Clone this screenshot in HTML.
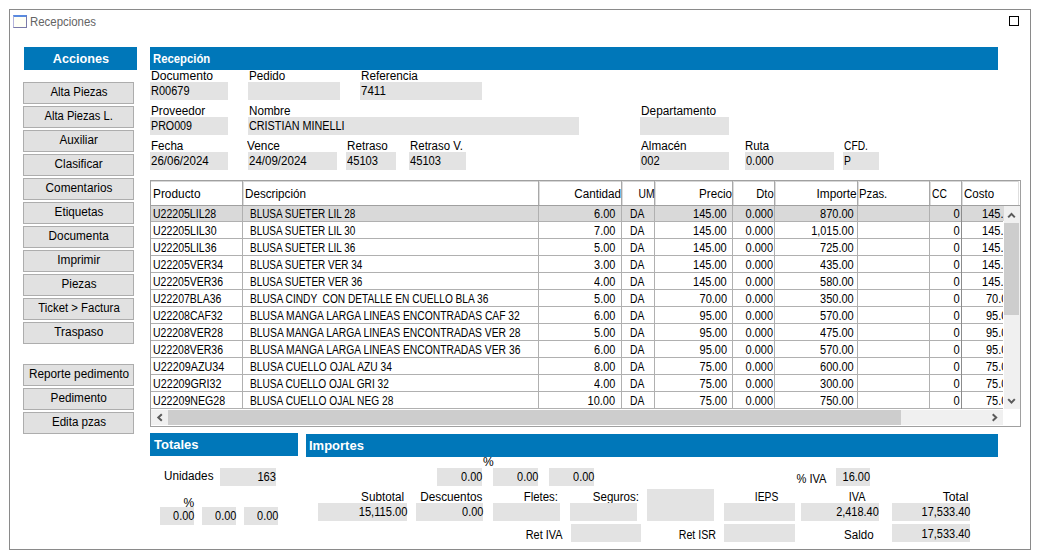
<!DOCTYPE html>
<html><head><meta charset="utf-8"><style>
html,body{margin:0;padding:0;background:#fff;}
body{width:1039px;height:558px;position:relative;overflow:hidden;font-family:"Liberation Sans",sans-serif;font-size:12px;color:#000;}
div{position:absolute;}
.t{position:absolute;white-space:pre;}
</style></head><body>
<div style="left:9px;top:9px;width:1022px;height:541px;border:1px solid #8a8a8a;box-sizing:border-box;background:#fff"></div>
<div style="left:13px;top:15px;width:14px;height:13px;box-sizing:border-box;border:1px solid #7a7aa8;border-left-color:#b4b4dc;border-top:2px solid #5a8ae0;background:#fffff6"></div>
<span class="t" style="left:30px;transform-origin:0 0;top:15px;line-height:14px;font-size:12px;color:#646464;transform:scaleX(0.9514);">Recepciones</span>
<div style="left:1009px;top:16px;width:10px;height:10px;box-sizing:border-box;border:1.5px solid #000"></div>
<div style="left:24px;top:47px;width:113px;height:23px;background:#0077b9"></div>
<span class="t" style="left:51.59px;transform-origin:50% 0;top:51px;line-height:15px;font-size:13px;font-weight:bold;color:#fff;transform:scaleX(0.9738);">Acciones</span>
<div style="left:150px;top:47px;width:848px;height:23px;background:#0077b9"></div>
<span class="t" style="left:153px;transform-origin:0 0;top:52px;line-height:14px;font-size:12px;font-weight:bold;color:#fff;transform:scaleX(0.9428);">Recepción</span>
<div style="left:150px;top:433px;width:148px;height:23px;background:#0077b9"></div>
<span class="t" style="left:154px;transform-origin:0 0;top:437px;line-height:15px;font-size:13px;font-weight:bold;color:#fff;">Totales</span>
<div style="left:306px;top:434px;width:692px;height:23px;background:#0077b9"></div>
<span class="t" style="left:309px;transform-origin:0 0;top:438px;line-height:15px;font-size:13px;font-weight:bold;color:#fff;">Importes</span>
<div style="left:23px;top:82px;width:111px;height:22px;box-sizing:border-box;border:1px solid #adadad;background:#e1e1e1"></div>
<span class="t" style="left:48.99px;transform-origin:50% 0;top:85px;line-height:14px;font-size:12px;color:#000;transform:scaleX(0.9516);">Alta Piezas</span>
<div style="left:23px;top:106px;width:111px;height:22px;box-sizing:border-box;border:1px solid #adadad;background:#e1e1e1"></div>
<span class="t" style="left:42.33px;transform-origin:50% 0;top:109px;line-height:14px;font-size:12px;color:#000;transform:scaleX(0.9295);">Alta Piezas L.</span>
<div style="left:23px;top:130px;width:111px;height:22px;box-sizing:border-box;border:1px solid #adadad;background:#e1e1e1"></div>
<span class="t" style="left:59.32px;transform-origin:50% 0;top:133px;line-height:14px;font-size:12px;color:#000;transform:scaleX(0.9715);">Auxiliar</span>
<div style="left:23px;top:154px;width:111px;height:22px;box-sizing:border-box;border:1px solid #adadad;background:#e1e1e1"></div>
<span class="t" style="left:54.32px;transform-origin:50% 0;top:157px;line-height:14px;font-size:12px;color:#000;transform:scaleX(0.9754);">Clasificar</span>
<div style="left:23px;top:178px;width:111px;height:22px;box-sizing:border-box;border:1px solid #adadad;background:#e1e1e1"></div>
<span class="t" style="left:44.98px;transform-origin:50% 0;top:181px;line-height:14px;font-size:12px;color:#000;transform:scaleX(0.9822);">Comentarios</span>
<div style="left:23px;top:202px;width:111px;height:22px;box-sizing:border-box;border:1px solid #adadad;background:#e1e1e1"></div>
<span class="t" style="left:53.99px;transform-origin:50% 0;top:205px;line-height:14px;font-size:12px;color:#000;transform:scaleX(0.9776);">Etiquetas</span>
<div style="left:23px;top:226px;width:111px;height:22px;box-sizing:border-box;border:1px solid #adadad;background:#e1e1e1"></div>
<span class="t" style="left:48.32px;transform-origin:50% 0;top:229px;line-height:14px;font-size:12px;color:#000;transform:scaleX(0.9802);">Documenta</span>
<div style="left:23px;top:250px;width:111px;height:22px;box-sizing:border-box;border:1px solid #adadad;background:#e1e1e1"></div>
<span class="t" style="left:57.33px;transform-origin:50% 0;top:253px;line-height:14px;font-size:12px;color:#000;transform:scaleX(0.9893);">Imprimir</span>
<div style="left:23px;top:274px;width:111px;height:22px;box-sizing:border-box;border:1px solid #adadad;background:#e1e1e1"></div>
<span class="t" style="left:60.99px;transform-origin:50% 0;top:277px;line-height:14px;font-size:12px;color:#000;transform:scaleX(0.9689);">Piezas</span>
<div style="left:23px;top:298px;width:111px;height:22px;box-sizing:border-box;border:1px solid #adadad;background:#e1e1e1"></div>
<span class="t" style="left:36.05px;transform-origin:50% 0;top:301px;line-height:14px;font-size:12px;color:#000;transform:scaleX(0.9494);">Ticket &gt; Factura</span>
<div style="left:23px;top:322px;width:111px;height:22px;box-sizing:border-box;border:1px solid #adadad;background:#e1e1e1"></div>
<span class="t" style="left:54.21px;transform-origin:50% 0;top:325px;line-height:14px;font-size:12px;color:#000;transform:scaleX(0.9881);">Traspaso</span>
<div style="left:23px;top:364px;width:111px;height:22px;box-sizing:border-box;border:1px solid #adadad;background:#e1e1e1"></div>
<span class="t" style="left:27.98px;transform-origin:50% 0;top:367px;line-height:14px;font-size:12px;color:#000;transform:scaleX(0.9816);">Reporte pedimento</span>
<div style="left:23px;top:388px;width:111px;height:22px;box-sizing:border-box;border:1px solid #adadad;background:#e1e1e1"></div>
<span class="t" style="left:50.32px;transform-origin:50% 0;top:391px;line-height:14px;font-size:12px;color:#000;transform:scaleX(0.9805);">Pedimento</span>
<div style="left:23px;top:412px;width:111px;height:22px;box-sizing:border-box;border:1px solid #adadad;background:#e1e1e1"></div>
<span class="t" style="left:50.99px;transform-origin:50% 0;top:415px;line-height:14px;font-size:12px;color:#000;transform:scaleX(0.9681);">Edita pzas</span>
<div style="left:150px;top:82px;width:78px;height:18px;background:#e3e3e3"></div>
<span class="t" style="left:151px;transform-origin:0 0;top:69px;line-height:14px;font-size:12px;color:#000;transform:scaleX(1.0104);">Documento</span>
<span class="t" style="left:151px;transform-origin:0 0;top:84px;line-height:14px;font-size:12px;color:#000;transform:scaleX(0.9156);">R00679</span>
<div style="left:248px;top:82px;width:92px;height:18px;background:#e3e3e3"></div>
<span class="t" style="left:249px;transform-origin:0 0;top:69px;line-height:14px;font-size:12px;color:#000;transform:scaleX(0.9700);">Pedido</span>
<div style="left:360px;top:82px;width:122px;height:18px;background:#e3e3e3"></div>
<span class="t" style="left:361px;transform-origin:0 0;top:69px;line-height:14px;font-size:12px;color:#000;transform:scaleX(0.9791);">Referencia</span>
<span class="t" style="left:361px;transform-origin:0 0;top:84px;line-height:14px;font-size:12px;color:#000;transform:scaleX(0.9621);">7411</span>
<div style="left:150px;top:117px;width:78px;height:18px;background:#e3e3e3"></div>
<span class="t" style="left:151px;transform-origin:0 0;top:104px;line-height:14px;font-size:12px;color:#000;transform:scaleX(0.9798);">Proveedor</span>
<span class="t" style="left:151px;transform-origin:0 0;top:119px;line-height:14px;font-size:12px;color:#000;transform:scaleX(0.8904);">PRO009</span>
<div style="left:248px;top:117px;width:331px;height:18px;background:#e3e3e3"></div>
<span class="t" style="left:249px;transform-origin:0 0;top:104px;line-height:14px;font-size:12px;color:#000;transform:scaleX(0.9716);">Nombre</span>
<span class="t" style="left:249px;transform-origin:0 0;top:119px;line-height:14px;font-size:12px;color:#000;transform:scaleX(0.9009);">CRISTIAN MINELLI</span>
<div style="left:640px;top:117px;width:89px;height:18px;background:#e3e3e3"></div>
<span class="t" style="left:641px;transform-origin:0 0;top:104px;line-height:14px;font-size:12px;color:#000;transform:scaleX(0.9864);">Departamento</span>
<div style="left:150px;top:152px;width:78px;height:18px;background:#e3e3e3"></div>
<span class="t" style="left:151px;transform-origin:0 0;top:139px;line-height:14px;font-size:12px;color:#000;transform:scaleX(0.9692);">Fecha</span>
<span class="t" style="left:151px;transform-origin:0 0;top:154px;line-height:14px;font-size:12px;color:#000;transform:scaleX(0.9612);">26/06/2024</span>
<div style="left:248px;top:152px;width:89px;height:18px;background:#e3e3e3"></div>
<span class="t" style="left:247px;transform-origin:0 0;top:139px;line-height:14px;font-size:12px;color:#000;transform:scaleX(0.9861);">Vence</span>
<span class="t" style="left:249px;transform-origin:0 0;top:154px;line-height:14px;font-size:12px;color:#000;transform:scaleX(0.9612);">24/09/2024</span>
<div style="left:346px;top:152px;width:50px;height:18px;background:#e3e3e3"></div>
<span class="t" style="left:347px;transform-origin:0 0;top:139px;line-height:14px;font-size:12px;color:#000;transform:scaleX(0.9711);">Retraso</span>
<span class="t" style="left:347px;transform-origin:0 0;top:154px;line-height:14px;font-size:12px;color:#000;transform:scaleX(0.9300);">45103</span>
<div style="left:409px;top:152px;width:57px;height:18px;background:#e3e3e3"></div>
<span class="t" style="left:410px;transform-origin:0 0;top:139px;line-height:14px;font-size:12px;color:#000;transform:scaleX(0.9537);">Retraso V.</span>
<span class="t" style="left:410px;transform-origin:0 0;top:154px;line-height:14px;font-size:12px;color:#000;transform:scaleX(0.9300);">45103</span>
<div style="left:640px;top:152px;width:89px;height:18px;background:#e3e3e3"></div>
<span class="t" style="left:641px;transform-origin:0 0;top:139px;line-height:14px;font-size:12px;color:#000;transform:scaleX(0.9760);">Almacén</span>
<span class="t" style="left:641px;transform-origin:0 0;top:154px;line-height:14px;font-size:12px;color:#000;transform:scaleX(0.9300);">002</span>
<div style="left:745px;top:152px;width:89px;height:18px;background:#e3e3e3"></div>
<span class="t" style="left:744.5px;transform-origin:0 0;top:139px;line-height:14px;font-size:12px;color:#000;transform:scaleX(0.9521);">Ruta</span>
<span class="t" style="left:746px;transform-origin:0 0;top:154px;line-height:14px;font-size:12px;color:#000;transform:scaleX(0.9156);">0.000</span>
<div style="left:843px;top:152px;width:36px;height:18px;background:#e3e3e3"></div>
<span class="t" style="left:844px;transform-origin:0 0;top:139px;line-height:14px;font-size:12px;color:#000;transform:scaleX(0.8529);">CFD.</span>
<span class="t" style="left:844px;transform-origin:0 0;top:154px;line-height:14px;font-size:12px;color:#000;transform:scaleX(0.8600);">P</span>
<div style="left:150px;top:180px;width:871px;height:247px;box-sizing:border-box;border:1px solid #a0a0a0;background:#fff"></div>
<div style="left:151px;top:181px;width:868px;height:1px;background:#d6d6d6"></div>
<div style="left:1018px;top:181px;width:1px;height:24px;background:#dedede"></div>
<div style="left:151px;top:205px;width:869px;height:1px;background:#a0a0a0"></div>
<div style="left:151px;top:206px;width:853px;height:15px;background:#d9d9d9"></div>
<div style="left:151px;top:221px;width:852px;height:1px;background:#b0b0b0"></div>
<div style="left:151px;top:238px;width:852px;height:1px;background:#b0b0b0"></div>
<div style="left:151px;top:255px;width:852px;height:1px;background:#b0b0b0"></div>
<div style="left:151px;top:272px;width:852px;height:1px;background:#b0b0b0"></div>
<div style="left:151px;top:289px;width:852px;height:1px;background:#b0b0b0"></div>
<div style="left:151px;top:306px;width:852px;height:1px;background:#b0b0b0"></div>
<div style="left:151px;top:323px;width:852px;height:1px;background:#b0b0b0"></div>
<div style="left:151px;top:340px;width:852px;height:1px;background:#b0b0b0"></div>
<div style="left:151px;top:357px;width:852px;height:1px;background:#b0b0b0"></div>
<div style="left:151px;top:374px;width:852px;height:1px;background:#b0b0b0"></div>
<div style="left:151px;top:391px;width:852px;height:1px;background:#b0b0b0"></div>
<div style="left:151px;top:408px;width:852px;height:1px;background:#b0b0b0"></div>
<div style="left:242px;top:206px;width:1px;height:203px;background:#b0b0b0"></div>
<div style="left:538px;top:206px;width:1px;height:203px;background:#b0b0b0"></div>
<div style="left:621px;top:206px;width:1px;height:203px;background:#b0b0b0"></div>
<div style="left:654px;top:206px;width:1px;height:203px;background:#b0b0b0"></div>
<div style="left:732px;top:206px;width:1px;height:203px;background:#b0b0b0"></div>
<div style="left:774px;top:206px;width:1px;height:203px;background:#b0b0b0"></div>
<div style="left:857px;top:206px;width:1px;height:203px;background:#b0b0b0"></div>
<div style="left:929px;top:206px;width:1px;height:203px;background:#b0b0b0"></div>
<div style="left:961px;top:206px;width:1px;height:203px;background:#8c8c8c"></div>
<div style="left:242px;top:181px;width:1px;height:24px;background:#a8a8a8"></div>
<div style="left:243px;top:181px;width:1px;height:24px;background:#dcdcdc"></div>
<div style="left:538px;top:181px;width:1px;height:24px;background:#a8a8a8"></div>
<div style="left:539px;top:181px;width:1px;height:24px;background:#dcdcdc"></div>
<div style="left:621px;top:181px;width:1px;height:24px;background:#a8a8a8"></div>
<div style="left:622px;top:181px;width:1px;height:24px;background:#dcdcdc"></div>
<div style="left:654px;top:181px;width:1px;height:24px;background:#a8a8a8"></div>
<div style="left:655px;top:181px;width:1px;height:24px;background:#dcdcdc"></div>
<div style="left:732px;top:181px;width:1px;height:24px;background:#a8a8a8"></div>
<div style="left:733px;top:181px;width:1px;height:24px;background:#dcdcdc"></div>
<div style="left:774px;top:181px;width:1px;height:24px;background:#a8a8a8"></div>
<div style="left:775px;top:181px;width:1px;height:24px;background:#dcdcdc"></div>
<div style="left:857px;top:181px;width:1px;height:24px;background:#a8a8a8"></div>
<div style="left:858px;top:181px;width:1px;height:24px;background:#dcdcdc"></div>
<div style="left:929px;top:181px;width:1px;height:24px;background:#a8a8a8"></div>
<div style="left:930px;top:181px;width:1px;height:24px;background:#dcdcdc"></div>
<div style="left:961px;top:181px;width:1px;height:24px;background:#a8a8a8"></div>
<div style="left:962px;top:181px;width:1px;height:24px;background:#dcdcdc"></div>
<span class="t" style="left:153px;transform-origin:0 0;top:187px;line-height:14px;font-size:12px;color:#000;transform:scaleX(0.9893);">Producto</span>
<span class="t" style="left:245px;transform-origin:0 0;top:187px;line-height:14px;font-size:12px;color:#000;transform:scaleX(0.9728);">Descripción</span>
<span class="t" style="right:418px;transform-origin:100% 0;top:187px;line-height:14px;font-size:12px;color:#000;transform:scaleX(0.9747);">Cantidad</span>
<span class="t" style="right:384.5px;transform-origin:100% 0;top:187px;line-height:14px;font-size:12px;color:#000;transform:scaleX(0.8600);">UM</span>
<span class="t" style="right:307px;transform-origin:100% 0;top:187px;line-height:14px;font-size:12px;color:#000;transform:scaleX(0.9671);">Precio</span>
<span class="t" style="right:265px;transform-origin:100% 0;top:187px;line-height:14px;font-size:12px;color:#000;transform:scaleX(0.9350);">Dto</span>
<span class="t" style="right:182px;transform-origin:100% 0;top:187px;line-height:14px;font-size:12px;color:#000;transform:scaleX(0.9885);">Importe</span>
<span class="t" style="left:859px;transform-origin:0 0;top:187px;line-height:14px;font-size:12px;color:#000;transform:scaleX(0.9405);">Pzas.</span>
<span class="t" style="left:932px;transform-origin:0 0;top:187px;line-height:14px;font-size:12px;color:#000;transform:scaleX(0.8600);">CC</span>
<span class="t" style="left:964px;transform-origin:0 0;top:187px;line-height:14px;font-size:12px;color:#000;transform:scaleX(0.9613);">Costo</span>
<span class="t" style="left:153px;transform-origin:0 0;top:207px;line-height:14px;font-size:12px;color:#000;transform:scaleX(0.8772);">U22205LIL28</span>
<span class="t" style="left:250px;transform-origin:0 0;top:207px;line-height:14px;font-size:12px;color:#000;transform:scaleX(0.8296);">BLUSA SUETER LIL 28</span>
<span class="t" style="right:424px;transform-origin:100% 0;top:207px;line-height:14px;font-size:12px;color:#000;transform:scaleX(0.9115);">6.00</span>
<span class="t" style="left:629.5px;transform-origin:0 0;top:207px;line-height:14px;font-size:12px;color:#000;transform:scaleX(0.8600);">DA</span>
<span class="t" style="right:312px;transform-origin:100% 0;top:207px;line-height:14px;font-size:12px;color:#000;transform:scaleX(0.9182);">145.00</span>
<span class="t" style="right:265.5px;transform-origin:100% 0;top:207px;line-height:14px;font-size:12px;color:#000;transform:scaleX(0.9156);">0.000</span>
<span class="t" style="right:185.5px;transform-origin:100% 0;top:207px;line-height:14px;font-size:12px;color:#000;transform:scaleX(0.9182);">870.00</span>
<span class="t" style="right:79px;transform-origin:100% 0;top:207px;line-height:14px;font-size:12px;color:#000;transform:scaleX(0.9300);">0</span>
<div style="left:963px;top:207px;width:40px;height:14px;overflow:hidden"><span class="t" style="left:19.31px;top:0;line-height:14px;transform-origin:0 0;transform:scaleX(0.9182)">145.00</span></div>
<span class="t" style="left:153px;transform-origin:0 0;top:224px;line-height:14px;font-size:12px;color:#000;transform:scaleX(0.8814);">U22205LIL30</span>
<span class="t" style="left:250px;transform-origin:0 0;top:224px;line-height:14px;font-size:12px;color:#000;transform:scaleX(0.8296);">BLUSA SUETER LIL 30</span>
<span class="t" style="right:424px;transform-origin:100% 0;top:224px;line-height:14px;font-size:12px;color:#000;transform:scaleX(0.9115);">7.00</span>
<span class="t" style="left:629.5px;transform-origin:0 0;top:224px;line-height:14px;font-size:12px;color:#000;transform:scaleX(0.8600);">DA</span>
<span class="t" style="right:312px;transform-origin:100% 0;top:224px;line-height:14px;font-size:12px;color:#000;transform:scaleX(0.9182);">145.00</span>
<span class="t" style="right:265.5px;transform-origin:100% 0;top:224px;line-height:14px;font-size:12px;color:#000;transform:scaleX(0.9156);">0.000</span>
<span class="t" style="right:185.5px;transform-origin:100% 0;top:224px;line-height:14px;font-size:12px;color:#000;transform:scaleX(0.9115);">1,015.00</span>
<span class="t" style="right:79px;transform-origin:100% 0;top:224px;line-height:14px;font-size:12px;color:#000;transform:scaleX(0.9300);">0</span>
<div style="left:963px;top:224px;width:40px;height:14px;overflow:hidden"><span class="t" style="left:19.31px;top:0;line-height:14px;transform-origin:0 0;transform:scaleX(0.9182)">145.00</span></div>
<span class="t" style="left:153px;transform-origin:0 0;top:241px;line-height:14px;font-size:12px;color:#000;transform:scaleX(0.8814);">U22205LIL36</span>
<span class="t" style="left:250px;transform-origin:0 0;top:241px;line-height:14px;font-size:12px;color:#000;transform:scaleX(0.8296);">BLUSA SUETER LIL 36</span>
<span class="t" style="right:424px;transform-origin:100% 0;top:241px;line-height:14px;font-size:12px;color:#000;transform:scaleX(0.9115);">5.00</span>
<span class="t" style="left:629.5px;transform-origin:0 0;top:241px;line-height:14px;font-size:12px;color:#000;transform:scaleX(0.8600);">DA</span>
<span class="t" style="right:312px;transform-origin:100% 0;top:241px;line-height:14px;font-size:12px;color:#000;transform:scaleX(0.9182);">145.00</span>
<span class="t" style="right:265.5px;transform-origin:100% 0;top:241px;line-height:14px;font-size:12px;color:#000;transform:scaleX(0.9156);">0.000</span>
<span class="t" style="right:185.5px;transform-origin:100% 0;top:241px;line-height:14px;font-size:12px;color:#000;transform:scaleX(0.9182);">725.00</span>
<span class="t" style="right:79px;transform-origin:100% 0;top:241px;line-height:14px;font-size:12px;color:#000;transform:scaleX(0.9300);">0</span>
<div style="left:963px;top:241px;width:40px;height:14px;overflow:hidden"><span class="t" style="left:19.31px;top:0;line-height:14px;transform-origin:0 0;transform:scaleX(0.9182)">145.00</span></div>
<span class="t" style="left:153px;transform-origin:0 0;top:258px;line-height:14px;font-size:12px;color:#000;transform:scaleX(0.8745);">U22205VER34</span>
<span class="t" style="left:250px;transform-origin:0 0;top:258px;line-height:14px;font-size:12px;color:#000;transform:scaleX(0.8296);">BLUSA SUETER VER 34</span>
<span class="t" style="right:424px;transform-origin:100% 0;top:258px;line-height:14px;font-size:12px;color:#000;transform:scaleX(0.9115);">3.00</span>
<span class="t" style="left:629.5px;transform-origin:0 0;top:258px;line-height:14px;font-size:12px;color:#000;transform:scaleX(0.8600);">DA</span>
<span class="t" style="right:312px;transform-origin:100% 0;top:258px;line-height:14px;font-size:12px;color:#000;transform:scaleX(0.9182);">145.00</span>
<span class="t" style="right:265.5px;transform-origin:100% 0;top:258px;line-height:14px;font-size:12px;color:#000;transform:scaleX(0.9156);">0.000</span>
<span class="t" style="right:185.5px;transform-origin:100% 0;top:258px;line-height:14px;font-size:12px;color:#000;transform:scaleX(0.9182);">435.00</span>
<span class="t" style="right:79px;transform-origin:100% 0;top:258px;line-height:14px;font-size:12px;color:#000;transform:scaleX(0.9300);">0</span>
<div style="left:963px;top:258px;width:40px;height:14px;overflow:hidden"><span class="t" style="left:19.31px;top:0;line-height:14px;transform-origin:0 0;transform:scaleX(0.9182)">145.00</span></div>
<span class="t" style="left:153px;transform-origin:0 0;top:275px;line-height:14px;font-size:12px;color:#000;transform:scaleX(0.8745);">U22205VER36</span>
<span class="t" style="left:250px;transform-origin:0 0;top:275px;line-height:14px;font-size:12px;color:#000;transform:scaleX(0.8296);">BLUSA SUETER VER 36</span>
<span class="t" style="right:424px;transform-origin:100% 0;top:275px;line-height:14px;font-size:12px;color:#000;transform:scaleX(0.9115);">4.00</span>
<span class="t" style="left:629.5px;transform-origin:0 0;top:275px;line-height:14px;font-size:12px;color:#000;transform:scaleX(0.8600);">DA</span>
<span class="t" style="right:312px;transform-origin:100% 0;top:275px;line-height:14px;font-size:12px;color:#000;transform:scaleX(0.9182);">145.00</span>
<span class="t" style="right:265.5px;transform-origin:100% 0;top:275px;line-height:14px;font-size:12px;color:#000;transform:scaleX(0.9156);">0.000</span>
<span class="t" style="right:185.5px;transform-origin:100% 0;top:275px;line-height:14px;font-size:12px;color:#000;transform:scaleX(0.9182);">580.00</span>
<span class="t" style="right:79px;transform-origin:100% 0;top:275px;line-height:14px;font-size:12px;color:#000;transform:scaleX(0.9300);">0</span>
<div style="left:963px;top:275px;width:40px;height:14px;overflow:hidden"><span class="t" style="left:19.31px;top:0;line-height:14px;transform-origin:0 0;transform:scaleX(0.9182)">145.00</span></div>
<span class="t" style="left:153px;transform-origin:0 0;top:292px;line-height:14px;font-size:12px;color:#000;transform:scaleX(0.8764);">U22207BLA36</span>
<span class="t" style="left:250px;transform-origin:0 0;top:292px;line-height:14px;font-size:12px;color:#000;transform:scaleX(0.8462);">BLUSA CINDY  CON DETALLE EN CUELLO BLA 36</span>
<span class="t" style="right:424px;transform-origin:100% 0;top:292px;line-height:14px;font-size:12px;color:#000;transform:scaleX(0.9115);">5.00</span>
<span class="t" style="left:629.5px;transform-origin:0 0;top:292px;line-height:14px;font-size:12px;color:#000;transform:scaleX(0.8600);">DA</span>
<span class="t" style="right:312px;transform-origin:100% 0;top:292px;line-height:14px;font-size:12px;color:#000;transform:scaleX(0.9156);">70.00</span>
<span class="t" style="right:265.5px;transform-origin:100% 0;top:292px;line-height:14px;font-size:12px;color:#000;transform:scaleX(0.9156);">0.000</span>
<span class="t" style="right:185.5px;transform-origin:100% 0;top:292px;line-height:14px;font-size:12px;color:#000;transform:scaleX(0.9182);">350.00</span>
<span class="t" style="right:79px;transform-origin:100% 0;top:292px;line-height:14px;font-size:12px;color:#000;transform:scaleX(0.9300);">0</span>
<div style="left:963px;top:292px;width:40px;height:14px;overflow:hidden"><span class="t" style="left:23.22px;top:0;line-height:14px;transform-origin:0 0;transform:scaleX(0.9156)">70.00</span></div>
<span class="t" style="left:153px;transform-origin:0 0;top:309px;line-height:14px;font-size:12px;color:#000;transform:scaleX(0.8781);">U22208CAF32</span>
<span class="t" style="left:250px;transform-origin:0 0;top:309px;line-height:14px;font-size:12px;color:#000;transform:scaleX(0.8591);">BLUSA MANGA LARGA LINEAS ENCONTRADAS CAF 32</span>
<span class="t" style="right:424px;transform-origin:100% 0;top:309px;line-height:14px;font-size:12px;color:#000;transform:scaleX(0.9115);">6.00</span>
<span class="t" style="left:629.5px;transform-origin:0 0;top:309px;line-height:14px;font-size:12px;color:#000;transform:scaleX(0.8600);">DA</span>
<span class="t" style="right:312px;transform-origin:100% 0;top:309px;line-height:14px;font-size:12px;color:#000;transform:scaleX(0.9156);">95.00</span>
<span class="t" style="right:265.5px;transform-origin:100% 0;top:309px;line-height:14px;font-size:12px;color:#000;transform:scaleX(0.9156);">0.000</span>
<span class="t" style="right:185.5px;transform-origin:100% 0;top:309px;line-height:14px;font-size:12px;color:#000;transform:scaleX(0.9182);">570.00</span>
<span class="t" style="right:79px;transform-origin:100% 0;top:309px;line-height:14px;font-size:12px;color:#000;transform:scaleX(0.9300);">0</span>
<div style="left:963px;top:309px;width:40px;height:14px;overflow:hidden"><span class="t" style="left:23.22px;top:0;line-height:14px;transform-origin:0 0;transform:scaleX(0.9156)">95.00</span></div>
<span class="t" style="left:153px;transform-origin:0 0;top:326px;line-height:14px;font-size:12px;color:#000;transform:scaleX(0.8745);">U22208VER28</span>
<span class="t" style="left:250px;transform-origin:0 0;top:326px;line-height:14px;font-size:12px;color:#000;transform:scaleX(0.8589);">BLUSA MANGA LARGA LINEAS ENCONTRADAS VER 28</span>
<span class="t" style="right:424px;transform-origin:100% 0;top:326px;line-height:14px;font-size:12px;color:#000;transform:scaleX(0.9115);">5.00</span>
<span class="t" style="left:629.5px;transform-origin:0 0;top:326px;line-height:14px;font-size:12px;color:#000;transform:scaleX(0.8600);">DA</span>
<span class="t" style="right:312px;transform-origin:100% 0;top:326px;line-height:14px;font-size:12px;color:#000;transform:scaleX(0.9156);">95.00</span>
<span class="t" style="right:265.5px;transform-origin:100% 0;top:326px;line-height:14px;font-size:12px;color:#000;transform:scaleX(0.9156);">0.000</span>
<span class="t" style="right:185.5px;transform-origin:100% 0;top:326px;line-height:14px;font-size:12px;color:#000;transform:scaleX(0.9182);">475.00</span>
<span class="t" style="right:79px;transform-origin:100% 0;top:326px;line-height:14px;font-size:12px;color:#000;transform:scaleX(0.9300);">0</span>
<div style="left:963px;top:326px;width:40px;height:14px;overflow:hidden"><span class="t" style="left:23.22px;top:0;line-height:14px;transform-origin:0 0;transform:scaleX(0.9156)">95.00</span></div>
<span class="t" style="left:153px;transform-origin:0 0;top:343px;line-height:14px;font-size:12px;color:#000;transform:scaleX(0.8745);">U22208VER36</span>
<span class="t" style="left:250px;transform-origin:0 0;top:343px;line-height:14px;font-size:12px;color:#000;transform:scaleX(0.8589);">BLUSA MANGA LARGA LINEAS ENCONTRADAS VER 36</span>
<span class="t" style="right:424px;transform-origin:100% 0;top:343px;line-height:14px;font-size:12px;color:#000;transform:scaleX(0.9115);">6.00</span>
<span class="t" style="left:629.5px;transform-origin:0 0;top:343px;line-height:14px;font-size:12px;color:#000;transform:scaleX(0.8600);">DA</span>
<span class="t" style="right:312px;transform-origin:100% 0;top:343px;line-height:14px;font-size:12px;color:#000;transform:scaleX(0.9156);">95.00</span>
<span class="t" style="right:265.5px;transform-origin:100% 0;top:343px;line-height:14px;font-size:12px;color:#000;transform:scaleX(0.9156);">0.000</span>
<span class="t" style="right:185.5px;transform-origin:100% 0;top:343px;line-height:14px;font-size:12px;color:#000;transform:scaleX(0.9182);">570.00</span>
<span class="t" style="right:79px;transform-origin:100% 0;top:343px;line-height:14px;font-size:12px;color:#000;transform:scaleX(0.9300);">0</span>
<div style="left:963px;top:343px;width:40px;height:14px;overflow:hidden"><span class="t" style="left:23.22px;top:0;line-height:14px;transform-origin:0 0;transform:scaleX(0.9156)">95.00</span></div>
<span class="t" style="left:153px;transform-origin:0 0;top:360px;line-height:14px;font-size:12px;color:#000;transform:scaleX(0.8970);">U22209AZU34</span>
<span class="t" style="left:250px;transform-origin:0 0;top:360px;line-height:14px;font-size:12px;color:#000;transform:scaleX(0.8529);">BLUSA CUELLO OJAL AZU 34</span>
<span class="t" style="right:424px;transform-origin:100% 0;top:360px;line-height:14px;font-size:12px;color:#000;transform:scaleX(0.9115);">8.00</span>
<span class="t" style="left:629.5px;transform-origin:0 0;top:360px;line-height:14px;font-size:12px;color:#000;transform:scaleX(0.8600);">DA</span>
<span class="t" style="right:312px;transform-origin:100% 0;top:360px;line-height:14px;font-size:12px;color:#000;transform:scaleX(0.9156);">75.00</span>
<span class="t" style="right:265.5px;transform-origin:100% 0;top:360px;line-height:14px;font-size:12px;color:#000;transform:scaleX(0.9156);">0.000</span>
<span class="t" style="right:185.5px;transform-origin:100% 0;top:360px;line-height:14px;font-size:12px;color:#000;transform:scaleX(0.9182);">600.00</span>
<span class="t" style="right:79px;transform-origin:100% 0;top:360px;line-height:14px;font-size:12px;color:#000;transform:scaleX(0.9300);">0</span>
<div style="left:963px;top:360px;width:40px;height:14px;overflow:hidden"><span class="t" style="left:23.22px;top:0;line-height:14px;transform-origin:0 0;transform:scaleX(0.9156)">75.00</span></div>
<span class="t" style="left:153px;transform-origin:0 0;top:377px;line-height:14px;font-size:12px;color:#000;transform:scaleX(0.8917);">U22209GRI32</span>
<span class="t" style="left:250px;transform-origin:0 0;top:377px;line-height:14px;font-size:12px;color:#000;transform:scaleX(0.8451);">BLUSA CUELLO OJAL GRI 32</span>
<span class="t" style="right:424px;transform-origin:100% 0;top:377px;line-height:14px;font-size:12px;color:#000;transform:scaleX(0.9115);">4.00</span>
<span class="t" style="left:629.5px;transform-origin:0 0;top:377px;line-height:14px;font-size:12px;color:#000;transform:scaleX(0.8600);">DA</span>
<span class="t" style="right:312px;transform-origin:100% 0;top:377px;line-height:14px;font-size:12px;color:#000;transform:scaleX(0.9156);">75.00</span>
<span class="t" style="right:265.5px;transform-origin:100% 0;top:377px;line-height:14px;font-size:12px;color:#000;transform:scaleX(0.9156);">0.000</span>
<span class="t" style="right:185.5px;transform-origin:100% 0;top:377px;line-height:14px;font-size:12px;color:#000;transform:scaleX(0.9182);">300.00</span>
<span class="t" style="right:79px;transform-origin:100% 0;top:377px;line-height:14px;font-size:12px;color:#000;transform:scaleX(0.9300);">0</span>
<div style="left:963px;top:377px;width:40px;height:14px;overflow:hidden"><span class="t" style="left:23.22px;top:0;line-height:14px;transform-origin:0 0;transform:scaleX(0.9156)">75.00</span></div>
<span class="t" style="left:153px;transform-origin:0 0;top:394px;line-height:14px;font-size:12px;color:#000;transform:scaleX(0.8873);">U22209NEG28</span>
<span class="t" style="left:250px;transform-origin:0 0;top:394px;line-height:14px;font-size:12px;color:#000;transform:scaleX(0.8483);">BLUSA CUELLO OJAL NEG 28</span>
<span class="t" style="right:424px;transform-origin:100% 0;top:394px;line-height:14px;font-size:12px;color:#000;transform:scaleX(0.9156);">10.00</span>
<span class="t" style="left:629.5px;transform-origin:0 0;top:394px;line-height:14px;font-size:12px;color:#000;transform:scaleX(0.8600);">DA</span>
<span class="t" style="right:312px;transform-origin:100% 0;top:394px;line-height:14px;font-size:12px;color:#000;transform:scaleX(0.9156);">75.00</span>
<span class="t" style="right:265.5px;transform-origin:100% 0;top:394px;line-height:14px;font-size:12px;color:#000;transform:scaleX(0.9156);">0.000</span>
<span class="t" style="right:185.5px;transform-origin:100% 0;top:394px;line-height:14px;font-size:12px;color:#000;transform:scaleX(0.9182);">750.00</span>
<span class="t" style="right:79px;transform-origin:100% 0;top:394px;line-height:14px;font-size:12px;color:#000;transform:scaleX(0.9300);">0</span>
<div style="left:963px;top:394px;width:40px;height:14px;overflow:hidden"><span class="t" style="left:23.22px;top:0;line-height:14px;transform-origin:0 0;transform:scaleX(0.9156)">75.00</span></div>
<div style="left:1004px;top:206px;width:16px;height:203px;background:#f0f0f0"></div>
<div style="left:1004px;top:223px;width:15px;height:92px;background:#cdcdcd"></div>
<div style="left:151px;top:410px;width:852px;height:15px;background:#f0f0f0"></div>
<div style="left:168px;top:410px;width:733px;height:15px;background:#cdcdcd"></div>
<div style="left:1003px;top:409px;width:17px;height:17px;background:#fff"></div>
<svg style="position:absolute;left:0;top:0" width="1039" height="558"><polyline points="1008.2,217.4 1011.5,213.9 1014.8,217.4" fill="none" stroke="#5a5a5a" stroke-width="2"/></svg>
<svg style="position:absolute;left:0;top:0" width="1039" height="558"><polyline points="1008.2,399.1 1011.5,402.6 1014.8,399.1" fill="none" stroke="#5a5a5a" stroke-width="2"/></svg>
<svg style="position:absolute;left:0;top:0" width="1039" height="558"><polyline points="161.8,414.2 158.3,417.5 161.8,420.8" fill="none" stroke="#5a5a5a" stroke-width="2"/></svg>
<svg style="position:absolute;left:0;top:0" width="1039" height="558"><polyline points="992.7,414.2 996.2,417.5 992.7,420.8" fill="none" stroke="#5a5a5a" stroke-width="2"/></svg>
<span class="t" style="left:164px;transform-origin:0 0;top:469px;line-height:14px;font-size:12px;color:#000;transform:scaleX(0.9761);">Unidades</span>
<div style="left:220px;top:468px;width:56px;height:18px;background:#e3e3e3"></div>
<span class="t" style="right:763px;transform-origin:100% 0;top:470px;line-height:14px;font-size:12px;color:#000;transform:scaleX(0.9300);">163</span>
<span class="t" style="left:183.5px;transform-origin:0 0;top:496px;line-height:14px;font-size:12px;color:#000;">%</span>
<div style="left:160px;top:507px;width:34px;height:18px;background:#e3e3e3"></div>
<span class="t" style="right:845px;transform-origin:100% 0;top:509px;line-height:14px;font-size:12px;color:#000;transform:scaleX(0.9115);">0.00</span>
<div style="left:202px;top:507px;width:34px;height:18px;background:#e3e3e3"></div>
<span class="t" style="right:803px;transform-origin:100% 0;top:509px;line-height:14px;font-size:12px;color:#000;transform:scaleX(0.9115);">0.00</span>
<div style="left:244px;top:507px;width:34px;height:18px;background:#e3e3e3"></div>
<span class="t" style="right:761px;transform-origin:100% 0;top:509px;line-height:14px;font-size:12px;color:#000;transform:scaleX(0.9115);">0.00</span>
<span class="t" style="left:483px;transform-origin:0 0;top:455px;line-height:14px;font-size:12px;color:#000;">%</span>
<div style="left:437px;top:468px;width:45px;height:18px;background:#e3e3e3"></div>
<span class="t" style="right:557px;transform-origin:100% 0;top:470px;line-height:14px;font-size:12px;color:#000;transform:scaleX(0.9115);">0.00</span>
<div style="left:493px;top:468px;width:45px;height:18px;background:#e3e3e3"></div>
<span class="t" style="right:501px;transform-origin:100% 0;top:470px;line-height:14px;font-size:12px;color:#000;transform:scaleX(0.9115);">0.00</span>
<div style="left:549px;top:468px;width:45px;height:18px;background:#e3e3e3"></div>
<span class="t" style="right:445px;transform-origin:100% 0;top:470px;line-height:14px;font-size:12px;color:#000;transform:scaleX(0.9115);">0.00</span>
<span class="t" style="right:213px;transform-origin:100% 0;top:472px;line-height:14px;font-size:12px;color:#000;transform:scaleX(0.9235);">% IVA</span>
<div style="left:836px;top:468px;width:34px;height:18px;background:#e3e3e3"></div>
<span class="t" style="right:169px;transform-origin:100% 0;top:470px;line-height:14px;font-size:12px;color:#000;transform:scaleX(0.9156);">16.00</span>
<span class="t" style="right:635px;transform-origin:100% 0;top:490px;line-height:14px;font-size:12px;color:#000;transform:scaleX(0.9746);">Subtotal</span>
<span class="t" style="right:557px;transform-origin:100% 0;top:490px;line-height:14px;font-size:12px;color:#000;transform:scaleX(0.9808);">Descuentos</span>
<span class="t" style="right:481px;transform-origin:100% 0;top:490px;line-height:14px;font-size:12px;color:#000;transform:scaleX(0.9530);">Fletes:</span>
<span class="t" style="right:400px;transform-origin:100% 0;top:490px;line-height:14px;font-size:12px;color:#000;transform:scaleX(0.9628);">Seguros:</span>
<span class="t" style="right:261px;transform-origin:100% 0;top:490px;line-height:14px;font-size:12px;color:#000;transform:scaleX(0.8600);">IEPS</span>
<span class="t" style="right:174px;transform-origin:100% 0;top:490px;line-height:14px;font-size:12px;color:#000;transform:scaleX(0.9015);">IVA</span>
<span class="t" style="right:71px;transform-origin:100% 0;top:490px;line-height:14px;font-size:12px;color:#000;transform:scaleX(1.0119);">Total</span>
<div style="left:318px;top:503px;width:89px;height:18px;background:#e3e3e3"></div>
<span class="t" style="right:632px;transform-origin:100% 0;top:505px;line-height:14px;font-size:12px;color:#000;transform:scaleX(0.9293);">15,115.00</span>
<div style="left:416px;top:503px;width:67px;height:18px;background:#e3e3e3"></div>
<span class="t" style="right:556px;transform-origin:100% 0;top:505px;line-height:14px;font-size:12px;color:#000;transform:scaleX(0.9115);">0.00</span>
<div style="left:493px;top:503px;width:67px;height:18px;background:#e3e3e3"></div>
<div style="left:570px;top:503px;width:67px;height:18px;background:#e3e3e3"></div>
<div style="left:724px;top:503px;width:71px;height:18px;background:#e3e3e3"></div>
<div style="left:801px;top:503px;width:78px;height:18px;background:#e3e3e3"></div>
<span class="t" style="right:160px;transform-origin:100% 0;top:505px;line-height:14px;font-size:12px;color:#000;transform:scaleX(0.9115);">2,418.40</span>
<div style="left:892px;top:503px;width:78px;height:18px;background:#e3e3e3"></div>
<span class="t" style="right:69px;transform-origin:100% 0;top:505px;line-height:14px;font-size:12px;color:#000;transform:scaleX(0.9138);">17,533.40</span>
<div style="left:647px;top:489px;width:67px;height:32px;background:#e3e3e3"></div>
<span class="t" style="right:477px;transform-origin:100% 0;top:528px;line-height:14px;font-size:12px;color:#000;transform:scaleX(0.9086);">Ret IVA</span>
<div style="left:571px;top:524px;width:70px;height:18px;background:#e3e3e3"></div>
<span class="t" style="right:323px;transform-origin:100% 0;top:528px;line-height:14px;font-size:12px;color:#000;transform:scaleX(0.8886);">Ret ISR</span>
<div style="left:724px;top:524px;width:71px;height:18px;background:#e3e3e3"></div>
<span class="t" style="right:165px;transform-origin:100% 0;top:528px;line-height:14px;font-size:12px;color:#000;transform:scaleX(0.9635);">Saldo</span>
<div style="left:892px;top:524px;width:78px;height:18px;background:#e3e3e3"></div>
<span class="t" style="right:69px;transform-origin:100% 0;top:527px;line-height:14px;font-size:12px;color:#000;transform:scaleX(0.9138);">17,533.40</span>
</body></html>
